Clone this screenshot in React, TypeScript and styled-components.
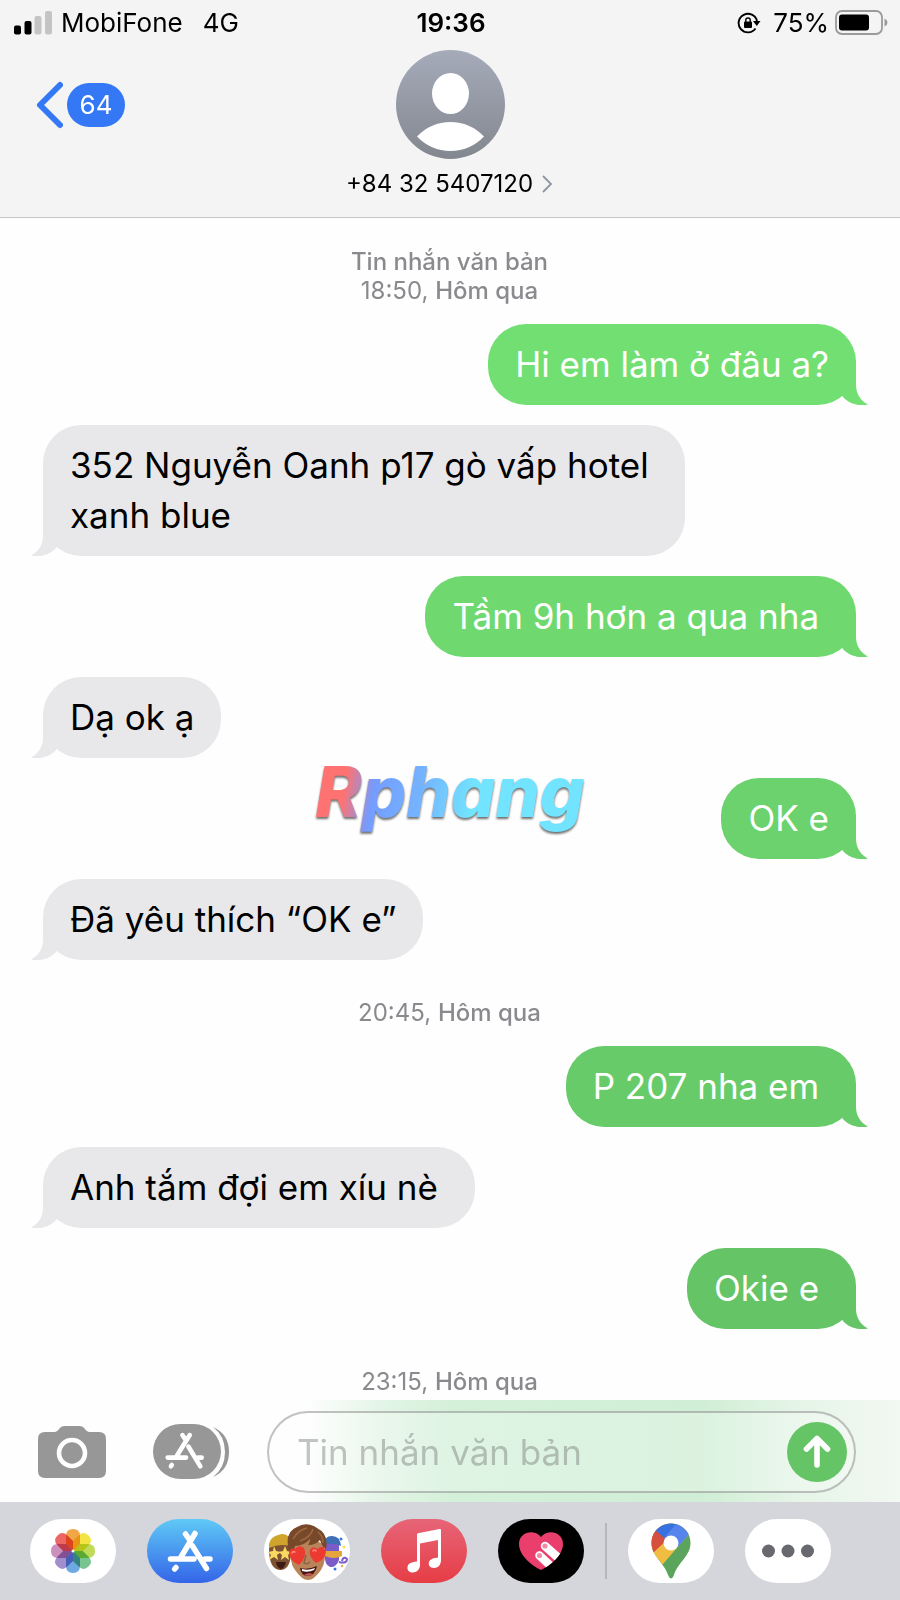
import React from "react";
import styled, { createGlobalStyle } from "styled-components";

const GlobalStyle = createGlobalStyle`
  *, *::before, *::after { box-sizing: border-box; }
  html, body { margin: 0; padding: 0; background: #fefefe; }
  body { font-family: Inter, "Noto Sans", sans-serif; color: #000; }
  button { border: 0; padding: 0; margin: 0; background: none; font: inherit; color: inherit; cursor: pointer; }
`;

const Screen = styled.main`
  position: relative;
  display: flex;
  flex-direction: column;
  min-height: 100vh;
  background: #fefefe;
`;

const Header = styled.header`
  display: flex;
  flex-direction: column;
  background: #f4f4f4;
  border-bottom: 1px solid #c6c6c6;
  padding: 0 12px 17px 14px;
`;

const StatusBar = styled.div`
  display: grid;
  grid-template-columns: 1fr auto 1fr;
  align-items: center;
  height: 46px;
  font-size: 26px;
  line-height: 32px;
`;

const StatusGroup = styled.div<{ $end?: boolean }>`
  display: flex;
  align-items: center;
  justify-content: ${(p) => (p.$end ? "flex-end" : "flex-start")};
  gap: ${(p) => (p.$end ? 6 : 9)}px;
`;

const Network = styled.span`
  margin-left: 11px;
`;

const Battery = styled.span`
  margin-left: 6px;
`;

const Clock = styled.time`
  font-weight: 600;
`;

const NavRow = styled.div`
  display: grid;
  grid-template-columns: 1fr auto 1fr;
  padding-top: 4px;
`;

const BackButton = styled.button`
  display: flex;
  align-items: center;
  gap: 4px;
  align-self: start;
  justify-self: start;
  margin: 31px 0 0 21px;
`;

const Count = styled.span`
  width: 58px;
  height: 44px;
  border-radius: 22px;
  background: #3478f6;
  color: #fff;
  font-size: 26px;
  line-height: 44px;
  text-align: center;
`;

const Contact = styled.button`
  display: flex;
  flex-direction: column;
  align-items: center;
`;

const ContactName = styled.span`
  display: flex;
  align-items: center;
  gap: 9px;
  margin-top: 9px;
  padding-right: 4px;
  font-size: 24px;
  line-height: 32px;
`;

const Thread = styled.ol`
  flex: 1;
  display: flex;
  flex-direction: column;
  list-style: none;
  margin: 0;
  padding: 29px 44px 0 43px;
`;

const Stamp = styled.li`
  display: flex;
  flex-direction: column;
  margin: 18px 0 19px;
  text-align: center;
  color: #8a8a8e;
  font-size: 24px;
  line-height: 29px;
  &:first-child { margin-top: 0; }
  &:last-child { margin-bottom: 0; }
`;

const Medium = styled.span`
  font-weight: 500;
`;

const Row = styled.li<{ $out?: boolean }>`
  display: flex;
  justify-content: ${(p) => (p.$out ? "flex-end" : "flex-start")};
  margin-bottom: 20px;
`;

const Bubble = styled.div<{ $fill: string; $out?: boolean }>`
  position: relative;
  max-width: 642px;
  padding: 15px 27px 16px;
  border-radius: 38px;
  background: ${(p) => p.$fill};
  color: ${(p) => (p.$out ? "#fff" : "#000")};
  font-size: 35px;
  line-height: 50px;
`;

const TailSvg = styled.svg<{ $out?: boolean }>`
  position: absolute;
  bottom: 0;
  ${(p) => (p.$out ? "right: -12px;" : "left: -12px; transform: scaleX(-1);")}
`;

const Watermark = styled.div`
  position: absolute;
  top: 50%;
  left: 50%;
  transform: translate(-50%, -50%);
  padding: 0 6px 16px;
  font-size: 70px;
  line-height: 90px;
  font-weight: 800;
  font-style: italic;
  color: transparent;
  background: linear-gradient(100deg, #ff7272 14%, #749cff 24%, #74b4ff 40%, #72e4ff 58%);
  background-clip: text;
  -webkit-background-clip: text;
  filter: drop-shadow(0 2px 1px rgba(60, 60, 60, 0.75));
  pointer-events: none;
`;

const Composer = styled.form`
  display: flex;
  align-items: center;
  padding: 2px 44px 0 38px;
  height: 102px;
  background: linear-gradient(90deg, #fefefe 34%, #e4f5e7 42%, #d4f0d9 50%, #d0eed5 78%, #e6f5e8 89%, #f2f8f2 100%);
`;

const ToolButton = styled.button<{ $gap: number }>`
  display: flex;
  flex: none;
  margin-right: ${(p) => p.$gap}px;
`;

const Field = styled.div`
  flex: 1;
  min-width: 0;
  display: flex;
  align-items: center;
  height: 82px;
  padding: 0 7px 0 28px;
  border: 2px solid rgba(120, 120, 120, 0.45);
  border-radius: 41px;
  background: rgba(255, 255, 255, 0.25);
`;

const TextInput = styled.input`
  flex: 1;
  width: 100%;
  min-width: 0;
  border: 0;
  outline: 0;
  padding: 0;
  background: transparent;
  font: inherit;
  font-size: 35px;
  line-height: 50px;
  &::placeholder { color: rgba(120, 125, 120, 0.45); opacity: 1; }
`;

const SendButton = styled.button`
  display: flex;
  flex: none;
  align-items: center;
  justify-content: center;
  width: 60px;
  height: 60px;
  border-radius: 50%;
  background: #65c466;
`;

const AppBar = styled.nav`
  display: flex;
  align-items: center;
  gap: 31px;
  height: 98px;
  padding: 0 30px;
  background: #d5d6db;
`;

const AppPill = styled.button<{ $bg: string }>`
  display: flex;
  flex: none;
  align-items: center;
  justify-content: center;
  width: 86px;
  height: 64px;
  border-radius: 32px;
  overflow: hidden;
  background: ${(p) => p.$bg};
`;

const Divider = styled.span`
  width: 2px;
  height: 56px;
  margin: 0 -10px;
  background: #b6b7bb;
`;

const Tail = ({ out, fill }: { out?: boolean; fill: string }) => (
  <TailSvg $out={out} width="32" height="40" viewBox="0 0 32 40" aria-hidden="true">
    <path fill={fill} d="M20 0V20C20 29 25 36 32 39.500C24 41.500 13 39 7 32L0 20Z" />
  </TailSvg>
);

const petals = ["#f0a038", "#f2e230", "#b9d94a", "#6cc088", "#62a2e0", "#9a84c8", "#c886b8", "#ea5a55"];

const green = ["#72df73", "#6fd970", "#6cd26d", "#68cb69", "#65c466"];

type Item =
  | { kind: "stamp"; title?: string; time: string }
  | { kind: "in"; text: string }
  | { kind: "out"; text: string; fill: string };

const items: Item[] = [
  { kind: "stamp", title: "Tin nhắn văn bản", time: "18:50," },
  { kind: "out", text: "Hi em làm ở đâu a?", fill: green[0] },
  { kind: "in", text: "352 Nguyễn Oanh p17 gò vấp hotel xanh blue" },
  { kind: "out", text: "Tầm 9h hơn a qua nha\u00a0", fill: green[1] },
  { kind: "in", text: "Dạ ok ạ" },
  { kind: "out", text: "OK e", fill: green[2] },
  { kind: "in", text: "Đã yêu thích “OK e”" },
  { kind: "stamp", time: "20:45," },
  { kind: "out", text: "P 207 nha em\u00a0", fill: green[3] },
  { kind: "in", text: "Anh tắm đợi em xíu nè\u00a0" },
  { kind: "out", text: "Okie e\u00a0", fill: green[4] },
  { kind: "stamp", time: "23:15," },
];

const Memoji = () => (
  <svg width="86" height="64" viewBox="0 0 86 64" aria-hidden="true">
    <path d="M5 30Q5 51 17 51Q27 50 27 32L25 24H6Z" fill="#7d5233" />
    <path d="M5 29Q4 17 18 15Q27 15 27 27Q15 24 5 29Z" fill="#d0a32c" />
    <path d="M10 27l2 5 5 1-4 3 1 5-4-3-5 3 2-5-3-3 5-1zM21 27l2 5 4 1-3 3 1 5-4-3-4 3 1-5-3-3 4-1z" fill="#f8d860" />
    <path d="M12 43H22Q20 50 17 50Q13 49 12 43Z" fill="#3b1b16" />
    <path d="M61 20Q68 15 75 20V41Q72 49 66 48Q60 45 61 36Z" fill="#7a5bc8" />
    <path d="M60 26Q60 17 68 17Q76 17 77 27Q70 23 60 26Z" fill="#3f6fb4" />
    <path d="M60 32H78V37Q70 41 61 37Z" fill="#e3a53c" />
    <path d="M75 43Q83 45 83 40Q79 37 78 42" stroke="#7a5bc8" strokeWidth="2" fill="none" />
    <circle cx="77" cy="20" r="1.500" fill="#3579e8" />
    <circle cx="80" cy="28" r="1.500" fill="#f2e34d" />
    <circle cx="71" cy="50" r="1.500" fill="#3579e8" />
    <circle cx="78" cy="47" r="1.200" fill="#f2a34d" />
    <path d="M27 26Q25 44 31 51Q38 61 44 61Q50 61 57 51Q63 42 60 26Q44 14 27 26Z" fill="#b9845a" />
    <path d="M25 32Q20 13 33 8Q43 2 53 9Q65 15 62 30Q58 28 56 21Q52 26 44 26Q46 23 46 20Q40 27 31 27Q30 32 28 35Z" fill="#77482a" />
    <path d="M29 20Q34 11 43 9M36 22Q47 18 49 10M54 13Q59 17 59 24" stroke="#9c6a41" strokeWidth="1.500" fill="none" />
    <path d="M35 46Q25 41 25 34Q26 28 31 30Q35 25 40 29Q44 37 35 46Z" fill="#ec3a31" />
    <path d="M52 44Q44 37 46 31Q49 26 53 30Q60 25 62 33Q61 41 52 44Z" fill="#ec3a31" />
    <path d="M28 34Q29 32 31 33M49 32Q50 30 52 32" stroke="#ff8d83" strokeWidth="1.500" fill="none" strokeLinecap="round" />
    <path d="M42 36L40 44Q43 46 46 43" stroke="#8f6040" strokeWidth="1.500" fill="none" />
    <path d="M36 49Q44 51 53 47Q51 57 43 57Q37 56 36 49Z" fill="#4a1816" />
    <path d="M38 50Q44 52 51 49L50 51Q44 54 38 52Z" fill="#fff" />
    <path d="M40 56Q44 53 49 55Q45 58 40 56Z" fill="#d35a58" />
  </svg>
);

export default function App() {
  return (
    <>
      <GlobalStyle />
      <Screen>
        <Header>
          <StatusBar>
            <StatusGroup>
              <svg width="38" height="24" viewBox="0 0 38 24" aria-hidden="true">
                <rect x="0" y="14.500" width="7" height="9" rx="2" />
                <rect x="10.500" y="10" width="7" height="13.500" rx="2" />
                <rect x="20.500" y="5" width="7" height="18.500" rx="2" fill="#c4c4c4" />
                <rect x="31" y="0" width="7" height="23.500" rx="2" fill="#c4c4c4" />
              </svg>
              <span>MobiFone</span>
              <Network>4G</Network>
            </StatusGroup>
            <Clock>19:36</Clock>
            <StatusGroup $end>
              <svg width="24" height="22" viewBox="0 0 24 22" aria-hidden="true">
                <path d="M18.500 16.500A9.300 9.300 0 1 1 20 9" fill="none" stroke="#000" strokeWidth="1.900" />
                <path d="M16 9H23.500L19.800 14Z" />
                <rect x="7" y="9.500" width="8" height="6.500" rx="1" />
                <path d="M8.800 10V8Q8.800 6 11 6T13.200 8V10" fill="none" stroke="#000" strokeWidth="1.400" />
              </svg>
              <Battery>75%</Battery>
              <svg width="53" height="26" viewBox="0 0 53 26" aria-hidden="true">
                <rect x="1" y="1" width="46" height="23" rx="6" fill="none" stroke="#9b9b9b" strokeWidth="1.800" />
                <rect x="4" y="4.500" width="30" height="16" rx="3" />
                <path d="M49.500 8.500Q52.500 10 52.500 12.500T49.500 16.500Z" fill="#9b9b9b" />
              </svg>
            </StatusGroup>
          </StatusBar>
          <NavRow>
            <BackButton type="button" aria-label="Back, 64 unread">
              <svg width="28" height="48" viewBox="0 0 28 48" aria-hidden="true">
                <path d="M25 4L5 24L25 44" fill="none" stroke="#3478f6" strokeWidth="6" strokeLinecap="round" strokeLinejoin="round" />
              </svg>
              <Count>64</Count>
            </BackButton>
            <Contact type="button">
              <svg width="109" height="109" viewBox="0 0 109 109" aria-hidden="true">
                <defs>
                  <linearGradient id="avatar" x1="0" y1="0" x2="0" y2="1">
                    <stop offset="0" stopColor="#a6abba" />
                    <stop offset="1" stopColor="#82878f" />
                  </linearGradient>
                </defs>
                <circle cx="54.500" cy="54.500" r="54.500" fill="url(#avatar)" />
                <ellipse cx="54.500" cy="43.500" rx="18.500" ry="20.500" fill="#fff" />
                <path d="M21 86.500Q35 72 54.500 72T88 86.500Q74 101 54.500 101T21 86.500Z" fill="#fff" />
              </svg>
              <ContactName>
                +84 32 5407120
                <svg width="10" height="18" viewBox="0 0 10 18" aria-hidden="true">
                  <path d="M1 1L9 9L1 17" fill="none" stroke="#8d95a3" strokeWidth="1.800" />
                </svg>
              </ContactName>
            </Contact>
          </NavRow>
        </Header>

        <Thread>
          {items.map((item, i) => {
            if (item.kind === "stamp") {
              return (
                <Stamp key={i}>
                  {item.title && <Medium>{item.title}</Medium>}
                  <span>{item.time} <Medium>Hôm qua</Medium></span>
                </Stamp>
              );
            }
            const out = item.kind === "out";
            const fill = item.kind === "out" ? item.fill : "#e8e8ea";
            return (
              <Row key={i} $out={out}>
                <Bubble $out={out} $fill={fill}>
                  {item.text}
                  <Tail out={out} fill={fill} />
                </Bubble>
              </Row>
            );
          })}
        </Thread>

        <Composer onSubmit={(e) => e.preventDefault()}>
          <ToolButton type="button" $gap={47} aria-label="Camera">
            <svg width="68" height="54" viewBox="0 0 68 54" aria-hidden="true">
              <path fill="#979797" d="M7 7H17Q20 6 22 3Q23 1 27 1H41Q45 1 46 3Q48 6 51 7H61Q68 7 68 14V46Q68 53 61 53H7Q0 53 0 46V14Q0 7 7 7Z" />
              <circle cx="34" cy="28" r="13" fill="none" stroke="#fff" strokeWidth="4.600" />
            </svg>
          </ToolButton>
          <ToolButton type="button" $gap={38} aria-label="Apps">
            <svg width="76" height="56" viewBox="0 0 76 56" aria-hidden="true">
              <path d="M60 3Q76 10 76 28T60 53Q72 44 72 28T60 3Z" fill="#979797" />
              <rect width="68" height="55" rx="27.500" fill="#979797" />
              <g transform="translate(11 6) scale(.92)" stroke="#fff" strokeLinecap="round" fill="none" strokeWidth="5">
                <path d="M20 5.500L24 11.500M28 5.500L14 28" />
                <path d="M26.500 18L39.500 39.500M4 30H24M37 30H41M8.500 38L7.500 39.500" />
              </g>
            </svg>
          </ToolButton>
          <Field>
            <TextInput type="text" placeholder="Tin nhắn văn bản" aria-label="Tin nhắn văn bản" />
            <SendButton type="submit" aria-label="Send">
              <svg width="28" height="34" viewBox="0 0 28 34" aria-hidden="true">
                <path d="M14 30V4M3.500 14L14 3.500L24.500 14" fill="none" stroke="#fff" strokeWidth="5.600" strokeLinecap="round" strokeLinejoin="round" />
              </svg>
            </SendButton>
          </Field>
        </Composer>

        <AppBar aria-label="Message apps">
          <AppPill type="button" $bg="#fff" aria-label="Photos">
            <svg width="46" height="46" viewBox="0 0 46 46" aria-hidden="true">
              {petals.map((c, i) => (
                <path
                  key={c}
                  d="M16 8Q16 1 23 1T30 8V16L23 23L16 16Z"
                  fill={c}
                  opacity="0.92"
                  transform={`rotate(${i * 45} 23 23)`}
                  style={{ mixBlendMode: "multiply" }}
                />
              ))}
              <circle cx="23" cy="23" r="1.500" fill="#fff" />
            </svg>
          </AppPill>
          <AppPill type="button" $bg="linear-gradient(#5fc9f6, #3465e8)" aria-label="App Store">
            <svg width="46" height="46" viewBox="0 0 46 46" aria-hidden="true">
              <g stroke="#fff" strokeWidth="5.500" strokeLinecap="round" fill="none">
                <path d="M18.500 6L23 12.500M28 5.500L14 29" />
                <path d="M25.500 18L39.500 40.500M3.500 31H27M38 31H43M9 39.500L7.700 41" />
              </g>
            </svg>
          </AppPill>
          <AppPill type="button" $bg="#fff" aria-label="Memoji">
            <Memoji />
          </AppPill>
          <AppPill type="button" $bg="linear-gradient(#e76578, #e63d45)" aria-label="Music">
            <svg width="36" height="46" viewBox="0 0 36 46" aria-hidden="true">
              <path fill="#fff" d="M11 6.500Q11 5.500 12 5.300L33.500 1Q35 .7 35 2V32C35 37 32 40 28 40C24 40 22 37 23 34C24 31 28 30 32 29.500V12L14 15.500V37C14 41 11 44.500 6.500 44.500C3 44.500 1 42 1.500 39C2 35 6 34 11 33.500Z" />
            </svg>
          </AppPill>
          <AppPill type="button" $bg="#000" aria-label="Digital Touch">
            <svg width="44" height="40" viewBox="0 0 44 40" aria-hidden="true">
              <defs>
                <clipPath id="heart"><path d="M22 39C12 34 0 24 0 13C0 2 14-3 22 6C30-3 44 2 44 13C44 24 32 34 22 39Z" /></clipPath>
              </defs>
              <g clipPath="url(#heart)">
                <rect width="44" height="40" fill="#ea3f6d" />
                <path d="M26 15L44 31M20.500 24.500L36 39" stroke="#fff" strokeWidth="8.500" strokeLinecap="round" />
                <circle cx="26" cy="15" r="2.600" fill="#f28ba6" />
                <circle cx="20.500" cy="24.500" r="2.600" fill="#f28ba6" />
              </g>
            </svg>
          </AppPill>
          <Divider />
          <AppPill type="button" $bg="#fff" aria-label="Google Maps">
            <svg width="40" height="56" viewBox="0 0 40 56" aria-hidden="true">
              <defs>
                <clipPath id="pin"><path d="M20 .5C9 .5 .5 9 .5 20C.5 33 13 39 17.500 53Q20 58 22.500 53C27 39 39.500 33 39.500 20C39.500 9 31 .5 20 .5Z" /></clipPath>
              </defs>
              <g clipPath="url(#pin)">
                <rect width="40" height="56" fill="#5aa45c" />
                <path d="M0 0H40V9L25 26L12 41L0 41Z" fill="#f0bd42" />
                <path d="M0 0L16 14L17 16L3 29L0 32Z" fill="#d5503f" />
                <path d="M4 7L14 15.500L28 0H4Z" fill="#3871e0" />
                <path d="M26 0L13 15L26 25L40 9V0Z" fill="#5585ec" />
              </g>
              <circle cx="20" cy="20" r="7.500" fill="#fff" />
            </svg>
          </AppPill>
          <AppPill type="button" $bg="#fff" aria-label="More">
            <svg width="52" height="14" viewBox="0 0 52 14" aria-hidden="true" fill="#68686f">
              <circle cx="6.500" cy="7" r="6.500" />
              <circle cx="26" cy="7" r="6.500" />
              <circle cx="45.500" cy="7" r="6.500" />
            </svg>
          </AppPill>
        </AppBar>
        <Watermark aria-hidden="true">Rphang</Watermark>
      </Screen>
    </>
  );
}
